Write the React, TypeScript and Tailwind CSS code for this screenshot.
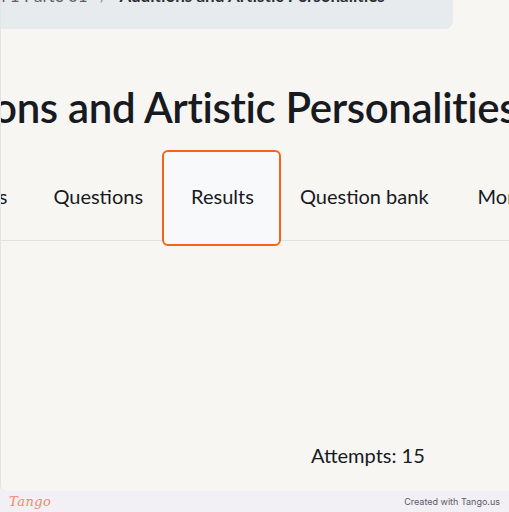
import React from "react";

export default function App() {
  return (
    <div
      className="w-[509px] h-[512px] overflow-hidden flex flex-col bg-[#f2f0f5]"
      style={{ fontFamily: "Lato, 'Noto Sans', sans-serif" }}
    >
      <div className="h-[491px] bg-[#f7f6f3] border-l border-[#e6e4e0] rounded-bl-[6px] flex flex-col overflow-hidden">
        {/* breadcrumb bar */}
        <div className="w-[452px] h-[29px] bg-[#e8ebee] rounded-br-[8px] overflow-hidden shrink-0">
          <div className="mt-[-16px] h-[24px] flex items-end whitespace-nowrap text-[17px] font-bold text-[#2b2f33] leading-[24px]">
            <span className="ml-[-34px] text-[#5c6167] font-normal">Nível 1 Parte 01</span>
            <span className="mx-[12px] text-[#8a9096] font-normal">/</span>
            <span>Auditions and Artistic Personalities</span>
          </div>
        </div>

        {/* title */}
        <div className="mt-[48px] h-[60px] whitespace-nowrap text-[42px] leading-[60px] font-semibold text-[#171a1e] ml-[-8px] tracking-[-0.35px]">
          ons and Artistic Personalities
        </div>

        {/* tabs */}
        <div className="mt-[13px] relative h-[96px]">
          <div className="absolute left-0 right-0 top-[90px] h-px bg-[#dde2e6]" />
          <div className="relative flex items-stretch h-[96px] whitespace-nowrap text-[20px] text-[#171a1e] ml-[-87px]">
            <div className="flex items-center pb-[4px] px-[23px]">Options</div>
            <div className="flex items-center pb-[4px] px-[23px]">Questions</div>
            <div className="flex items-center pb-[4px] pl-[27px] pr-[25px] mx-[-4px] border-2 border-[#f86415] rounded-[6px] bg-[#f8f9fb]">
              Results
            </div>
            <div className="flex items-center pb-[4px] pl-[23px] pr-[26px]">Question bank</div>
            <div className="flex items-center pb-[4px] px-[23px]">More</div>
          </div>
        </div>

        {/* attempts */}
        <div className="mt-[197px] pl-[310px] text-[20px] leading-[24px] text-[#171a1e] whitespace-nowrap">
          Attempts: 15
        </div>
      </div>

      {/* footer */}
      <div className="flex-1 flex items-center justify-between px-[9px]">
        <span
          className="italic text-[13px] text-[#f3876a] tracking-[0.5px]"
          style={{ fontFamily: "'DejaVu Serif', serif" }}
        >
          Tango
        </span>
        <span className="text-[9px] text-[#5b5869]" style={{ fontFamily: "Inter, sans-serif" }}>
          Created with Tango.us
        </span>
      </div>
    </div>
  );
}
